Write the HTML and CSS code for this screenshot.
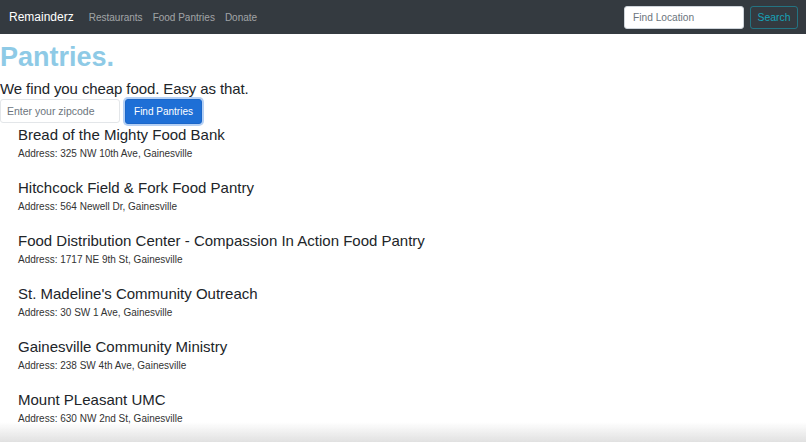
FILE: index.html
```html
<!DOCTYPE html>
<html>
<head>
<meta charset="utf-8">
<link rel="stylesheet" href="styles.css">
</head>
<body>
<nav class="navbar">
  <a class="brand">Remainderz</a>
  <ul class="nav-links">
    <li>Restaurants</li>
    <li>Food Pantries</li>
    <li>Donate</li>
  </ul>
  <form class="nav-search">
    <input class="nav-input" type="text" placeholder="Find Location">
    <button class="nav-btn" type="button">Search</button>
  </form>
</nav>
<main class="content">
  <h1 class="title">Pantries.</h1>
  <p class="lead">We find you cheap food. Easy as that.</p>
  <div class="zip-row">
    <input class="zip-input" type="text" placeholder="Enter your zipcode">
    <button class="zip-btn" type="button">Find Pantries</button>
  </div>
  <ul class="pantries">
    <li class="pantry"><h2 class="pantry-name">Bread of the Mighty Food Bank</h2><p class="pantry-addr">Address: 325 NW 10th Ave, Gainesville</p></li>
    <li class="pantry"><h2 class="pantry-name">Hitchcock Field &amp; Fork Food Pantry</h2><p class="pantry-addr">Address: 564 Newell Dr, Gainesville</p></li>
    <li class="pantry"><h2 class="pantry-name">Food Distribution Center - Compassion In Action Food Pantry</h2><p class="pantry-addr">Address: 1717 NE 9th St, Gainesville</p></li>
    <li class="pantry"><h2 class="pantry-name">St. Madeline's Community Outreach</h2><p class="pantry-addr">Address: 30 SW 1 Ave, Gainesville</p></li>
    <li class="pantry"><h2 class="pantry-name">Gainesville Community Ministry</h2><p class="pantry-addr">Address: 238 SW 4th Ave, Gainesville</p></li>
    <li class="pantry"><h2 class="pantry-name">Mount PLeasant UMC</h2><p class="pantry-addr">Address: 630 NW 2nd St, Gainesville</p></li>
  </ul>
</main>
<div class="fade"></div>
</body>
</html>
```
FILE: styles.css
```css
* { box-sizing: border-box; }
html, body { margin: 0; padding: 0; }
body {
  font-family: "Liberation Sans", Arial, sans-serif;
  color: #212529;
  background: #fff;
  width: 806px;
  height: 442px;
  overflow: hidden;
}
.navbar {
  height: 34px;
  background: #343a40;
  display: flex;
  align-items: center;
  padding: 0 8px 0 9px;
}
.brand {
  color: #fff;
  font-size: 12px;
  margin-right: 15px;
}
.nav-links {
  list-style: none;
  margin: 0;
  padding: 0;
  display: flex;
  gap: 10px;
  flex: 1;
}
.nav-links li {
  color: rgba(255,255,255,.55);
  font-size: 10px;
}
.nav-search {
  display: flex;
  gap: 6px;
  margin: 0;
}
.nav-input {
  width: 120px;
  height: 23px;
  border: 1px solid #ced4da;
  border-radius: 3px;
  padding: 0 8px;
  font-family: inherit;
  font-size: 10.2px;
  color: #495057;
}
.nav-input::placeholder { color: #6c757d; }
.nav-btn {
  width: 48px;
  height: 23px;
  background: transparent;
  border: 1px solid rgba(23,162,184,.55);
  color: #17a2b8;
  border-radius: 3px;
  font-family: inherit;
  font-size: 10.4px;
  padding: 0;
}
.content { padding: 0; }
.title {
  margin: 6px 0 0 0;
  font-size: 27px;
  line-height: 34px;
  font-weight: 700;
  color: #8ecae6;
}
.lead {
  margin: 5px 0 0 0;
  font-size: 15px;
  letter-spacing: -0.1px;
  line-height: 20px;
}
.zip-row {
  display: flex;
  gap: 5px;
  margin-top: 0;
}
.zip-input {
  width: 120px;
  height: 24px;
  border: 1px solid #e3e6e9;
  border-radius: 3px;
  padding: 0 6px;
  font-family: inherit;
  font-size: 10.5px;
}
.zip-input::placeholder { color: #6c757d; }
.zip-btn {
  width: 77px;
  height: 25px;
  background: #1e6fd6;
  color: #fff;
  border: 1px solid #1a66c9;
  border-radius: 3px;
  box-shadow: 0 0 0 2px rgba(90,150,230,.45);
  font-family: inherit;
  font-size: 10px;
  padding: 0;
}
.pantries {
  list-style: none;
  margin: 1px 0 0 0;
  padding: 0 0 0 18px;
}
.pantry { height: 53px; }
.pantry-name {
  margin: 0;
  font-size: 15px;
  line-height: 20px;
  font-weight: 400;
  color: #212529;
}
.pantry-addr {
  margin: 1px 0 0 0;
  font-size: 10px;
  line-height: 15px;
  color: #333;
}
.fade {
  position: fixed;
  left: 0;
  right: 0;
  bottom: 0;
  height: 20px;
  background: linear-gradient(to bottom, rgba(235,235,235,0), rgba(225,225,225,1));
  pointer-events: none;
}
```
